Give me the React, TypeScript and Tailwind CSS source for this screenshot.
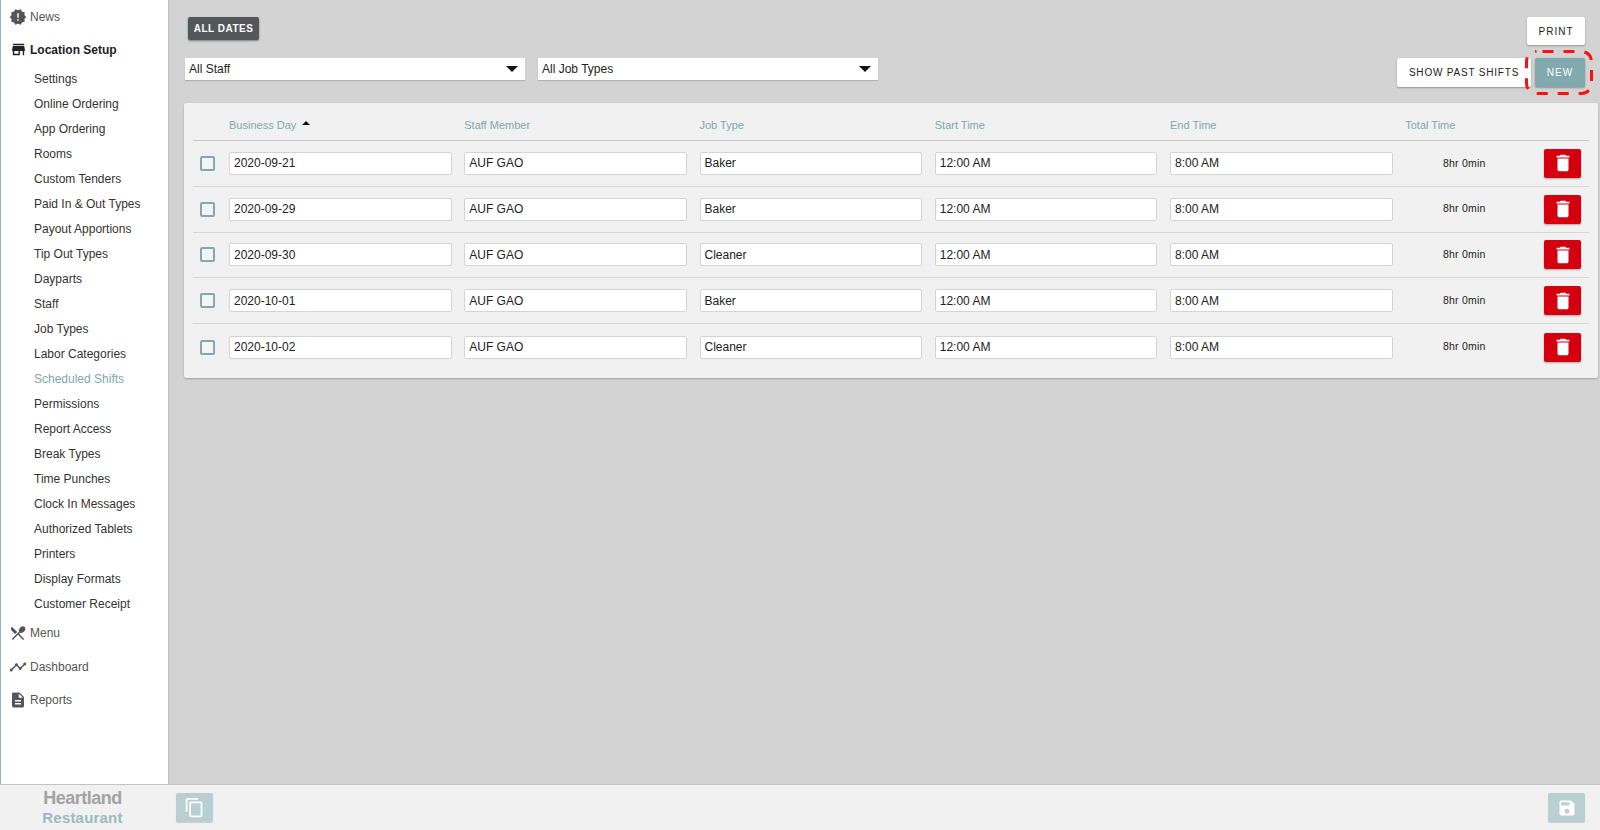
import {
  MdNewReleases,
  MdStore,
  MdRestaurantMenu,
  MdTimeline,
  MdDescription,
  MdDelete,
  MdContentCopy,
  MdSave,
} from "react-icons/md";

const setupLinks = [
  "Settings",
  "Online Ordering",
  "App Ordering",
  "Rooms",
  "Custom Tenders",
  "Paid In & Out Types",
  "Payout Apportions",
  "Tip Out Types",
  "Dayparts",
  "Staff",
  "Job Types",
  "Labor Categories",
  "Scheduled Shifts",
  "Permissions",
  "Report Access",
  "Break Types",
  "Time Punches",
  "Clock In Messages",
  "Authorized Tablets",
  "Printers",
  "Display Formats",
  "Customer Receipt",
];

const shifts = [
  { day: "2020-09-21", job: "Baker" },
  { day: "2020-09-29", job: "Baker" },
  { day: "2020-09-30", job: "Cleaner" },
  { day: "2020-10-01", job: "Baker" },
  { day: "2020-10-02", job: "Cleaner" },
];

function Field({ value }: { value: string }) {
  return (
    <div className="w-[222.5px] h-[23px] bg-white border border-[#d4d4d4] rounded-[2px] pl-[4px] flex items-center text-[12px] text-[#222]">
      {value}
    </div>
  );
}

function Select({ label }: { label: string }) {
  return (
    <div className="w-[340px] h-[22px] bg-white pl-[4px] pr-[7px] flex items-center justify-between text-[12px] text-[#222] shadow-[0_1px_1px_rgba(0,0,0,0.15)]">
      {label}
      <span className="w-0 h-0 border-x-[6px] border-x-transparent border-t-[6px] border-t-[#111]"></span>
    </div>
  );
}

export default function App() {
  return (
    <div className="w-[1600px] h-[830px] flex flex-col overflow-hidden bg-[#d3d3d3] font-['Liberation_Sans',sans-serif]">
      <div className="flex flex-1 min-h-0">
        <aside className="w-[168px] shrink-0 bg-white border-l border-[#9fb0c4] shadow-[1px_0_1px_rgba(0,0,0,0.08)] text-[12px] text-[#444]">
          <div className="h-[33px] flex items-center pl-[8px]">
            <MdNewReleases className="w-[18px] h-[18px] text-[#555]" />
            <span className="ml-[3px] text-[#555]">News</span>
          </div>
          <div className="h-[33px] flex items-center pl-[9px] font-bold text-[#222]">
            <MdStore className="w-[17px] h-[17px] text-[#222]" />
            <span className="ml-[3px]">Location Setup</span>
          </div>
          <div className="pl-[33px] text-[#333]">
            {setupLinks.map((link) => (
              <div
                key={link}
                className={"h-[25px] flex items-center " + (link === "Scheduled Shifts" ? "text-[#7fa8ad]" : "")}
              >
                {link}
              </div>
            ))}
          </div>
          <div className="h-[34px] flex items-center pl-[8px]">
            <MdRestaurantMenu className="w-[18px] h-[18px] text-[#555]" />
            <span className="ml-[3px] text-[#555]">Menu</span>
          </div>
          <div className="h-[33px] flex items-center pl-[8px]">
            <MdTimeline className="w-[18px] h-[18px] text-[#555]" />
            <span className="ml-[3px] text-[#555]">Dashboard</span>
          </div>
          <div className="h-[34px] flex items-center pl-[8px]">
            <MdDescription className="w-[18px] h-[18px] text-[#555]" />
            <span className="ml-[3px] text-[#555]">Reports</span>
          </div>
        </aside>

        <main className="flex-1 min-w-0 pl-[16px] pr-[2px] pt-[17px]">
          <div className="flex justify-between h-[86px]">
            <div className="flex flex-col">
              <button className="self-start ml-[4px] w-[71px] h-[23px] bg-[#53575a] text-white rounded-[2px] text-[10px] font-bold tracking-[0.5px] shadow-[0_1px_2px_rgba(0,0,0,0.4)]">
                ALL DATES
              </button>
              <div className="mt-[18px] ml-[1px] flex gap-[13px]">
                <Select label="All Staff" />
                <Select label="All Job Types" />
              </div>
            </div>
            <div className="flex flex-col items-end pr-[13px]">
              <button className="w-[58px] h-[28px] bg-white rounded-[2px] text-[10px] tracking-[1px] text-[#222] shadow-[0_1px_2px_rgba(0,0,0,0.3)]">
                PRINT
              </button>
              <div className="mt-[13px] flex gap-[4px]">
                <button className="w-[134px] h-[29px] bg-white rounded-[2px] text-[10px] tracking-[0.8px] text-[#222] shadow-[0_1px_2px_rgba(0,0,0,0.3)]">
                  SHOW PAST SHIFTS
                </button>
                <div className="relative">
                  <button className="w-[50px] h-[29px] bg-[#82a9ae] rounded-[2px] text-[10px] tracking-[1px] text-white shadow-[0_1px_2px_rgba(0,0,0,0.3)]">
                    NEW
                  </button>
                  <svg className="absolute left-[-10px] top-[-8px] w-[70px] h-[46px]" viewBox="0 0 70 46" fill="none">
                    <rect
                      x="1.5"
                      y="1.5"
                      width="65"
                      height="42"
                      rx="10"
                      stroke="#ff1010"
                      strokeWidth="3"
                      strokeDasharray="11 10"
                      strokeDashoffset="-6"
                    />
                  </svg>
                </div>
              </div>
            </div>
          </div>

          <section className="bg-[#f1f1f1] rounded-[2px] shadow-[0_1px_2px_rgba(0,0,0,0.25)] px-[9px] pb-[8px]">
            <div className="grid grid-cols-[36px_repeat(5,235.25px)_1fr] h-[38px] items-end pb-[7px] border-b border-[#c9c9c9] text-[11px] text-[#7fa8ad]">
              <div></div>
              <div className="flex items-center">
                Business Day
                <span className="ml-[6px] mb-[3px] w-0 h-0 border-x-[4px] border-x-transparent border-b-[4px] border-b-[#111]"></span>
              </div>
              <div>Staff Member</div>
              <div>Job Type</div>
              <div>Start Time</div>
              <div>End Time</div>
              <div>Total Time</div>
            </div>
            {shifts.map((shift, i) => (
              <div
                key={shift.day}
                className={
                  "grid grid-cols-[36px_repeat(5,235.25px)_1fr] h-[45.8px] items-center " +
                  (i < shifts.length - 1 ? "border-b border-[#d6d6d6]" : "")
                }
              >
                <div className="pl-[7px]">
                  <div className="w-[15px] h-[15px] border-2 border-[#82a9ae] rounded-[2px] bg-[#f4f4f4]"></div>
                </div>
                <Field value={shift.day} />
                <Field value="AUF GAO" />
                <Field value={shift.job} />
                <Field value="12:00 AM" />
                <Field value="8:00 AM" />
                <div className="flex items-center justify-between pr-[8px]">
                  <span className="w-[118px] text-center text-[10.5px] text-[#222] tracking-[0.2px]">8hr 0min</span>
                  <button className="w-[37px] h-[29px] bg-[#d4000f] rounded-[2px] flex items-center justify-center shadow-[0_1px_2px_rgba(0,0,0,0.3)]">
                    <MdDelete className="w-[22px] h-[22px] text-white" />
                  </button>
                </div>
              </div>
            ))}
          </section>
        </main>
      </div>

      <footer className="h-[46px] shrink-0 flex bg-[#f1f1f1] border-t border-[#c4c4c4]">
        <div className="w-[168px] shrink-0 flex flex-col items-center justify-center pr-[3px] leading-[19px] font-bold">
          <span className="text-[18px] text-[#a3a3a3] tracking-[-0.5px]">Heartland</span>
          <span className="text-[15px] text-[#9abbc0] tracking-[0.2px]">Restaurant</span>
        </div>
        <div className="flex-1 flex items-center justify-between pl-[8px] pr-[15px]">
          <button className="w-[37px] h-[29px] bg-[#b9cfd2] rounded-[2px] flex items-center justify-center shadow-[0_1px_1px_rgba(0,0,0,0.15)]">
            <MdContentCopy className="w-[21px] h-[21px] text-white" />
          </button>
          <button className="w-[37px] h-[29px] bg-[#b9cfd2] rounded-[2px] flex items-center justify-center shadow-[0_1px_1px_rgba(0,0,0,0.15)]">
            <MdSave className="w-[20px] h-[20px] text-white" />
          </button>
        </div>
      </footer>
    </div>
  );
}
